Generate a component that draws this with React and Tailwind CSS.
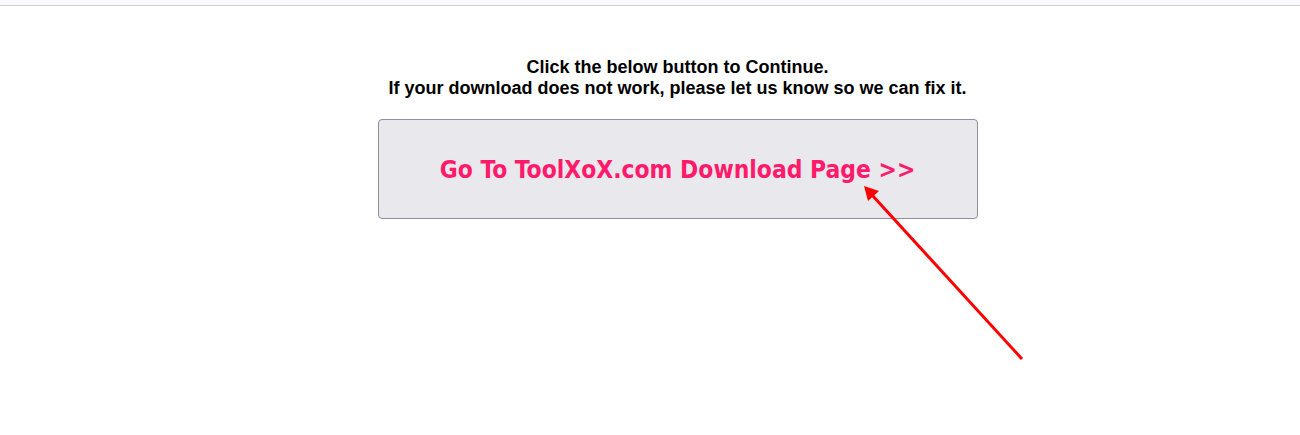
export default function App() {
  return (
    <div className="relative h-[435px] w-[1300px] overflow-hidden bg-white">
      {/* top strip */}
      <div className="box-content h-[5px] border-b border-[#cfcfd3] bg-[#f9f9fb]" />

      <div className="flex flex-col items-center pl-[55px] pt-[51px]">
        <p className="text-center font-['Liberation_Sans',Arial,sans-serif] text-[18px] font-bold leading-[21px] text-black">
          Click the below button to Continue.
          <br />
          If your download does not work, please let us know so we can fix it.
        </p>

        <button className="mt-[20px] flex h-[100px] w-[600px] items-center justify-center rounded-[4px] border border-[#8f8f9d] bg-[#e9e9ed] pt-[3px] font-['DejaVu_Sans_Condensed','DejaVu_Sans',sans-serif] text-[24.4px] font-bold text-[#ff1a6c]">
          Go To ToolXoX.com Download Page &gt;&gt;
        </button>
      </div>

      {/* red pointer arrow */}
      <svg className="absolute left-0 top-0" width="1300" height="435">
        <line x1="1022" y1="359" x2="872" y2="195" stroke="#ff0000" strokeWidth="3" />
        <polygon points="864,186 868,201 879,191" fill="#ff0000" />
      </svg>
    </div>
  );
}
